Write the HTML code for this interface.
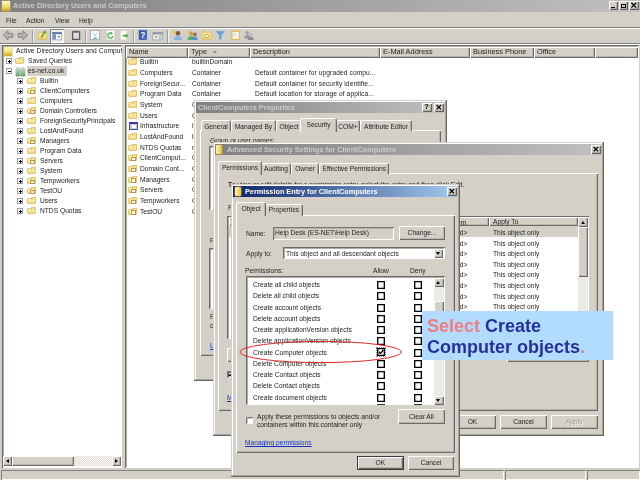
<!DOCTYPE html>
<html>
<head>
<meta charset="utf-8">
<title>Active Directory Users and Computers</title>
<style>
html,body{margin:0;padding:0;}
body{will-change:transform;width:640px;height:480px;overflow:hidden;background:#d4d0c8;position:relative;
 font-family:"Liberation Sans",sans-serif;font-size:7.4px;color:#222;line-height:10px;}
div,span,i,b{position:absolute;box-sizing:border-box;white-space:nowrap;font-style:normal;font-weight:normal;}
.t{height:10px;line-height:10px;transform:scaleX(.9);transform-origin:0 50%;}
.t.c{text-align:center;transform-origin:50% 50%;}
.tb{height:12px;color:#cacaca;font-weight:bold;font-size:8px;line-height:12px;transform:scaleX(.912);transform-origin:0 50%;}
.in{background:linear-gradient(90deg,#808080,#c0c0c0);}
.ac{background:linear-gradient(90deg,#0a246a,#a6caf0);}
.cap{background:#d4d0c8;box-shadow:inset 1px 1px 0 #fff,inset -1px -1px 0 #606060,inset -2px -2px 0 #b4b0a8;width:10px;height:9px;font-size:7px;line-height:9px;text-align:center;color:#000;font-weight:bold;}
.dlg{background:#d4d0c8;box-shadow:inset -1px -1px 0 #686868,inset 1px 1px 0 #d4d0c8,inset -2px -2px 0 #a8a49c,inset 2px 2px 0 #fff;}
.sunk{background:#fff;box-shadow:inset 1px 1px 0 #6c6c6c,inset -1px -1px 0 #fff,inset 2px 2px 0 #b0aca4;}
.btn{background:#d4d0c8;box-shadow:inset 1px 1px 0 #fff,inset -1px -1px 0 #6a6a6a,inset -2px -2px 0 #b8b4ac;text-align:center;}
.hdr{background:#d4d0c8;box-shadow:inset 1px 1px 0 #fff,inset -1px -1px 0 #6a6a6a,inset -2px -2px 0 #b8b4ac;height:11px;line-height:9px;padding-left:3px;}
.tab{background:#d4d0c8;box-shadow:inset 1px 1px 0 #fff,inset -1px 0 0 #6a6a6a,inset -2px 0 0 #b8b4ac;border-radius:2px 2px 0 0;text-align:center;}
.page{background:#d4d0c8;box-shadow:inset 1px 1px 0 #fff,inset -1px -1px 0 #6a6a6a,inset -2px -2px 0 #b8b4ac;}
.chk{width:8px;height:8px;background:#fff;border:1px solid #000;box-shadow:inset 0 0 0 .35px #000;}
.pm{width:6px;height:6px;border:1px solid #9c9c9c;}
.pm{background:linear-gradient(#000,#000) center/3px 1px no-repeat,#fff;}
.pm.p{background:linear-gradient(#000,#000) center/3px 1px no-repeat,linear-gradient(#000,#000) center/1px 3px no-repeat,#fff;}
.trk{background:repeating-conic-gradient(#f6f5f2 0 25%,#e2dfd8 0 50%) 0 0/2px 2px;}
.f{width:9px;height:6px;background:linear-gradient(#fff6c4,#f3d878);border:1px solid #e2c678;border-radius:1px;}
.f:before{content:"";position:absolute;left:3px;top:-2px;width:3px;height:2px;background:#f6e08c;border:1px solid #e2c678;border-bottom:0;}
.f.o:after{content:"";position:absolute;left:1.5px;top:.5px;width:3px;height:2.5px;border:1px solid #b89848;background:#fffbe0;}
.sep{width:2px;height:13px;border-left:1px solid #9c9c9c;border-right:1px solid #f4f4f4;}
.ic{width:10px;height:10px;}
</style>
</head>
<body>
<div class="in" style="left:0px;top:0px;width:640px;height:12px;"></div>
<div class="" style="left:2.3px;top:1.3px;width:8px;height:9.4px;background:linear-gradient(#fff8c8,#f4dc70 55%,#c8a428);box-shadow:0 0 0 .4px #c8b060;"></div>
<div class="tb" style="left:13px;top:0;">Active Directory Users and Computers</div>
<div class="cap" style="left:608.5px;top:1px;width:9px;height:8.6px;"><i style="left:2px;top:5.6px;width:4px;height:1.3px;background:#000"></i></div>
<div class="cap" style="left:618.5px;top:1px;width:9px;height:8.6px;"><i style="left:2px;top:2.5px;width:5px;height:4.4px;border:1px solid #000;border-top-width:1.6px"></i></div>
<div class="cap" style="left:629.4px;top:1px;width:10px;height:8.6px;"><svg style="position:absolute;left:0;top:0" width="10" height="9" viewBox="0 0 10 9"><path d="M2.4 1.8 L7.2 6.6 M7.2 1.8 L2.4 6.6" stroke="#000" stroke-width="1.25" fill="none"/></svg></div>
<div class="t" style="left:6px;top:15.7px;">File</div>
<div class="t" style="left:26px;top:15.7px;">Action</div>
<div class="t" style="left:55px;top:15.7px;">View</div>
<div class="t" style="left:79px;top:15.7px;">Help</div>
<div class="" style="left:0px;top:27px;width:640px;height:1px;background:#808080"></div>
<div class="" style="left:0px;top:28px;width:640px;height:1px;background:#fff"></div>
<div class="" style="left:0px;top:43px;width:640px;height:1px;background:#808080"></div>
<div class="" style="left:0px;top:44px;width:640px;height:1px;background:#fff"></div>
<div class="sep" style="left:32px;top:30px;width:2px;height:13px;"></div>
<div class="sep" style="left:85px;top:30px;width:2px;height:13px;"></div>
<div class="sep" style="left:133px;top:30px;width:2px;height:13px;"></div>
<div class="sep" style="left:167px;top:30px;width:2px;height:13px;"></div>
<div class="" style="left:50px;top:29px;width:14px;height:14px;background:#f2f1ed;box-shadow:inset 1px 1px 0 #808080,inset -1px -1px 0 #fff;"></div>
<svg style="position:absolute;left:0;top:28px" width="260" height="16" viewBox="0 28 260 16">
<defs><linearGradient id="gy" x1="0" y1="0" x2="0" y2="1"><stop offset="0" stop-color="#fff4b0"/><stop offset="1" stop-color="#f0d060"/></linearGradient>
<linearGradient id="gb" x1="0" y1="0" x2="1" y2="1"><stop offset="0" stop-color="#2848a8"/><stop offset="1" stop-color="#5078d0"/></linearGradient></defs>
<path d="M3.2 35.3 L8 30.8 V33.3 H12.8 V37.3 H8 V39.8 Z" fill="#b4b4b4" stroke="#808080" stroke-width=".9"/>
<path d="M27.8 35.3 L23 30.8 V33.3 H18.2 V37.3 H23 V39.8 Z" fill="#b4b4b4" stroke="#808080" stroke-width=".9"/>
<rect x="38.3" y="33" width="8.4" height="6.4" fill="url(#gy)" stroke="#d8b858" stroke-width=".6"/>
<path d="M40.5 37 L43.5 32.5 L42.3 32 L46 30.5 L46.2 34 L45 33.3 L42 37.8 Z" fill="#58b030"/>
<rect x="52.3" y="32.3" width="9.4" height="7.6" fill="#fff" stroke="#8898b8" stroke-width=".7"/>
<rect x="52.3" y="32.3" width="9.4" height="1.8" fill="#5870a8"/>
<rect x="53" y="34.3" width="3" height="5.2" fill="#7890c8"/>
<path d="M59.5 35.3 L57.5 36.8 L59.5 38.3 Z" fill="#508050"/>
<rect x="72.6" y="31.8" width="7" height="7.6" fill="#dcdcdc" stroke="#5c5c5c" stroke-width="1.3"/>
<rect x="74.6" y="30.8" width="3" height="1.6" fill="#5c5c5c"/>
<rect x="90.6" y="30.5" width="8.8" height="9.2" fill="#fdfdff" stroke="#9aa0b0" stroke-width=".8"/>
<path d="M93 33 L95 36 L97 33" fill="none" stroke="#a8c4e8" stroke-width="1"/>
<rect x="93.5" y="37.5" width="3.2" height="1.4" fill="#40b8c8"/>
<rect x="106.8" y="30.8" width="7.6" height="9" fill="#fff" stroke="#d8d8d8" stroke-width=".5"/>
<path d="M113 35.8 A2.6 2.6 0 1 1 111.5 33.2" fill="none" stroke="#48b048" stroke-width="1.3"/>
<path d="M110.6 31.8 L113 33.3 L110.8 34.8 Z" fill="#48b048"/>
<rect x="120.3" y="30.8" width="6.6" height="9" fill="#fffef4" stroke="#d8d4c0" stroke-width=".5"/>
<path d="M122.5 35 H125.5 V33.6 L128.5 35.8 L125.5 38 V36.6 H122.5 Z" fill="#48b048"/>
<rect x="138.8" y="30.2" width="8.2" height="9.8" fill="url(#gb)"/>
<text x="142.9" y="38.3" font-family="Liberation Sans, sans-serif" font-size="8.5" font-weight="bold" fill="#fff" text-anchor="middle">?</text>
<rect x="152.9" y="32.5" width="9.8" height="7.4" fill="#f0f0f4" stroke="#9098a8" stroke-width=".7"/>
<rect x="152.9" y="32.5" width="9.8" height="1.8" fill="#8890a4"/>
<path d="M155.5 35.3 L157.8 36.8 L155.5 38.3 Z" fill="#78a838"/>
<rect x="159" y="34.8" width="2.5" height="4.6" fill="#b8c0d0"/>
<circle cx="178" cy="33.2" r="2.3" fill="#7a5a40"/>
<path d="M173.8 40 Q173.8 35.8 178 35.8 Q182.2 35.8 182.2 40 Z" fill="#88b8e4"/>
<path d="M172.3 32.5 L174.5 30.5 L176.2 32.3 L174.5 34.3 Z" fill="#f0c040"/>
<circle cx="191" cy="33.5" r="2" fill="#c89858"/><path d="M187.5 40 Q187.5 36 191 36 Q194.5 36 194.5 40 Z" fill="#58b060"/>
<circle cx="194.8" cy="34.5" r="1.9" fill="#a07050"/><path d="M191.8 40 Q191.8 36.8 194.8 36.8 Q197.6 36.8 197.6 40 Z" fill="#5890d0"/>
<path d="M187 32 L188.8 30.3 L190.3 32 L188.8 33.6 Z" fill="#f0c040"/>
<rect x="202.3" y="32.5" width="8.6" height="6.8" fill="url(#gy)" stroke="#dcc060" stroke-width=".6"/>
<rect x="205" y="34.3" width="3.2" height="3.4" fill="#fffbe0" stroke="#b89848" stroke-width=".7"/>
<path d="M201.8 32.3 L203.8 30 L205.6 32.3 Z" fill="#f0c040"/>
<path d="M215.7 31.2 H225 L221.5 35.2 V39.4 H219.2 V35.2 Z" fill="#68a0d8"/>
<rect x="231.9" y="31.3" width="7.4" height="8" fill="#fffdf0" stroke="#e0b838" stroke-width="1.1"/>
<circle cx="235" cy="34.8" r="1.8" fill="#f4f4f4" stroke="#c0c0c0" stroke-width=".6"/>
<circle cx="247.2" cy="32.8" r="1.9" fill="#a4a4a4"/><path d="M244.2 38.5 Q244.2 35 247.2 35 Q250.2 35 250.2 38.5 Z" fill="#989898"/>
<circle cx="250.8" cy="34.8" r="1.8" fill="#b8b8b8"/><path d="M247.8 40 Q247.8 37 250.8 37 Q253.8 37 253.8 40 Z" fill="#8c8c8c"/>
</svg>
<div class="sunk" style="left:2px;top:45px;width:120px;height:423px;overflow:hidden;">
<div style="left:2.3px;top:2px;width:7.6px;height:9px;background:linear-gradient(#fff8c8,#f4dc70 55%,#c8a428);box-shadow:0 0 0 .4px #c8b060;"></div>
<div class="t" style="left:14px;top:1px;letter-spacing:.09px">Active Directory Users and Computers</div>
<div class="pm p" style="left:4px;top:13px;"></div>
<div class="f" style="left:13px;top:13px;"></div>
<div class="t" style="left:26px;top:11px;">Saved Queries</div>
<div class="pm" style="left:4px;top:23px;"></div>
<div style="left:14px;top:22.5px;width:4.4px;height:8px;background:linear-gradient(#c8d8e0,#88c088 60%,#60a068);border-radius:1.5px 1.5px 0 0;box-shadow:0 0 0 .4px #90a8a0;"></div>
<div style="left:18.8px;top:22.5px;width:4.4px;height:8px;background:linear-gradient(#c8d8e0,#88c088 60%,#60a068);border-radius:1.5px 1.5px 0 0;box-shadow:0 0 0 .4px #90a8a0;"></div>
<div style="left:25px;top:21px;width:40px;height:10px;background:#d4d0c8;"></div>
<div class="t" style="left:26px;top:21px;">es-net.co.uk</div>
<div class="pm p" style="left:15px;top:33px;"></div>
<div class="f" style="left:25px;top:33px;"></div>
<div class="t" style="left:38px;top:31px;">Builtin</div>
<div class="pm p" style="left:15px;top:43px;"></div>
<div class="f o" style="left:25px;top:43px;"></div>
<div class="t" style="left:38px;top:41px;">ClientComputers</div>
<div class="pm p" style="left:15px;top:53px;"></div>
<div class="f" style="left:25px;top:53px;"></div>
<div class="t" style="left:38px;top:51px;">Computers</div>
<div class="pm p" style="left:15px;top:63px;"></div>
<div class="f o" style="left:25px;top:63px;"></div>
<div class="t" style="left:38px;top:61px;">Domain Controllers</div>
<div class="pm p" style="left:15px;top:73px;"></div>
<div class="f" style="left:25px;top:73px;"></div>
<div class="t" style="left:38px;top:71px;">ForeignSecurityPrincipals</div>
<div class="pm p" style="left:15px;top:83px;"></div>
<div class="f" style="left:25px;top:83px;"></div>
<div class="t" style="left:38px;top:81px;">LostAndFound</div>
<div class="pm p" style="left:15px;top:93px;"></div>
<div class="f o" style="left:25px;top:93px;"></div>
<div class="t" style="left:38px;top:91px;">Managers</div>
<div class="pm p" style="left:15px;top:103px;"></div>
<div class="f" style="left:25px;top:103px;"></div>
<div class="t" style="left:38px;top:101px;">Program Data</div>
<div class="pm p" style="left:15px;top:113px;"></div>
<div class="f o" style="left:25px;top:113px;"></div>
<div class="t" style="left:38px;top:111px;">Servers</div>
<div class="pm p" style="left:15px;top:123px;"></div>
<div class="f" style="left:25px;top:123px;"></div>
<div class="t" style="left:38px;top:121px;">System</div>
<div class="pm p" style="left:15px;top:133px;"></div>
<div class="f o" style="left:25px;top:133px;"></div>
<div class="t" style="left:38px;top:131px;">Tempworkers</div>
<div class="pm p" style="left:15px;top:143px;"></div>
<div class="f o" style="left:25px;top:143px;"></div>
<div class="t" style="left:38px;top:141px;">TestOU</div>
<div class="pm p" style="left:15px;top:153px;"></div>
<div class="f" style="left:25px;top:153px;"></div>
<div class="t" style="left:38px;top:151px;">Users</div>
<div class="pm p" style="left:15px;top:163px;"></div>
<div class="f" style="left:25px;top:163px;"></div>
<div class="t" style="left:38px;top:161px;">NTDS Quotas</div>
<div class="trk" style="left:1px;top:411.3px;width:118px;height:9.7px;"></div>
<div class="btn" style="left:1px;top:411.3px;width:9px;height:9.7px;"><i style="left:2.5px;top:2.8px;border:2px solid transparent;border-right:3px solid #000;border-left:0"></i></div>
<div class="btn" style="left:10px;top:411.3px;width:62px;height:9.7px;"></div>
<div class="btn" style="left:109.7px;top:411.3px;width:9.3px;height:9.7px;"><i style="left:3.5px;top:2.8px;border:2px solid transparent;border-left:3px solid #000;border-right:0"></i></div>
</div>
<div class="sunk" style="left:125px;top:45px;width:514px;height:423px;overflow:hidden;">
<div class="hdr" style="left:1px;top:1.5px;width:62px;">Name</div>
<div class="hdr" style="left:63px;top:1.5px;width:62px;">Type</div>
<div class="hdr" style="left:125px;top:1.5px;width:130px;">Description</div>
<div class="hdr" style="left:255px;top:1.5px;width:90px;">E-Mail Address</div>
<div class="hdr" style="left:345px;top:1.5px;width:64px;">Business Phone</div>
<div class="hdr" style="left:409px;top:1.5px;width:61px;">Office</div>
<div class="hdr" style="left:470px;top:1.5px;width:43px;"></div>
<i style="left:88px;top:5px;border:2.5px solid transparent;border-bottom:3px solid #909090;border-top:0"></i>
<div class="f" style="left:3px;top:14.4px;"></div>
<div class="t" style="left:14.5px;top:12.3px;">Builtin</div>
<div class="t" style="left:67px;top:12.3px;">builtinDomain</div>
<div class="f" style="left:3px;top:25.07px;"></div>
<div class="t" style="left:14.5px;top:22.97px;">Computers</div>
<div class="t" style="left:67px;top:22.97px;">Container</div>
<div class="t" style="left:129.5px;top:22.97px;letter-spacing:.1px">Default container for upgraded compu...</div>
<div class="f" style="left:3px;top:35.73px;"></div>
<div class="t" style="left:14.5px;top:33.63px;">ForeignSecur...</div>
<div class="t" style="left:67px;top:33.63px;">Container</div>
<div class="t" style="left:129.5px;top:33.63px;letter-spacing:.1px">Default container for security identifie...</div>
<div class="f" style="left:3px;top:46.4px;"></div>
<div class="t" style="left:14.5px;top:44.3px;">Program Data</div>
<div class="t" style="left:67px;top:44.3px;">Container</div>
<div class="t" style="left:129.5px;top:44.3px;letter-spacing:.1px">Default location for storage of applica...</div>
<div class="f" style="left:3px;top:57.07px;"></div>
<div class="t" style="left:14.5px;top:54.97px;">System</div>
<div class="t" style="left:67px;top:54.97px;">Container</div>
<div class="f" style="left:3px;top:67.73px;"></div>
<div class="t" style="left:14.5px;top:65.63px;">Users</div>
<div class="t" style="left:67px;top:65.63px;">Container</div>
<div style="left:3.5px;top:76.8px;width:9px;height:8.5px;background:linear-gradient(#fff,#fff) 2px 1px/4px 3px no-repeat,#c8c8e0;border:1px solid #50508c;border-top:2px solid #38389c;"></div>
<div class="t" style="left:14.5px;top:76.3px;">Infrastructure</div>
<div class="t" style="left:67px;top:76.3px;">infrastructure...</div>
<div class="f" style="left:3px;top:89.07px;"></div>
<div class="t" style="left:14.5px;top:86.97px;">LostAndFound</div>
<div class="t" style="left:67px;top:86.97px;">lostAndFound</div>
<div class="f" style="left:3px;top:99.74px;"></div>
<div class="t" style="left:14.5px;top:97.64px;">NTDS Quotas</div>
<div class="t" style="left:67px;top:97.64px;">msDS-Quota...</div>
<div class="f o" style="left:3px;top:110.4px;"></div>
<div class="t" style="left:14.5px;top:108.3px;">ClientComput...</div>
<div class="t" style="left:67px;top:108.3px;">Organization...</div>
<div class="f o" style="left:3px;top:121.07px;"></div>
<div class="t" style="left:14.5px;top:118.97px;">Domain Cont...</div>
<div class="t" style="left:67px;top:118.97px;">Organization...</div>
<div class="f o" style="left:3px;top:131.74px;"></div>
<div class="t" style="left:14.5px;top:129.64px;">Managers</div>
<div class="t" style="left:67px;top:129.64px;">Organization...</div>
<div class="f o" style="left:3px;top:142.4px;"></div>
<div class="t" style="left:14.5px;top:140.3px;">Servers</div>
<div class="t" style="left:67px;top:140.3px;">Organization...</div>
<div class="f o" style="left:3px;top:153.07px;"></div>
<div class="t" style="left:14.5px;top:150.97px;">Tempworkers</div>
<div class="t" style="left:67px;top:150.97px;">Organization...</div>
<div class="f o" style="left:3px;top:163.74px;"></div>
<div class="t" style="left:14.5px;top:161.64px;">TestOU</div>
<div class="t" style="left:67px;top:161.64px;">Organization...</div>
</div>
<div class="" style="left:0px;top:468px;width:640px;height:12px;background:#d4d0c8"></div>
<div class="" style="left:1px;top:470px;width:503px;height:10px;box-shadow:inset 1px 1px 0 #808080,inset -1px -1px 0 #fff;"></div>
<div class="" style="left:505px;top:470px;width:81px;height:10px;box-shadow:inset 1px 1px 0 #808080,inset -1px -1px 0 #fff;"></div>
<div class="" style="left:587px;top:470px;width:53px;height:10px;box-shadow:inset 1px 1px 0 #808080,inset -1px -1px 0 #fff;"></div>
<div class="dlg" style="left:194px;top:100px;width:253px;height:280.6px;"></div>
<div class="in" style="left:196px;top:102px;width:249px;height:11px;"></div>
<div class="tb" style="left:198px;top:101.5px;">ClientComputers Properties</div>
<div class="cap" style="left:422px;top:103px;width:10px;height:9px;"><i style="left:0;top:0;width:9px;text-align:center;font-size:7.5px;line-height:8.5px;font-weight:bold;color:#000">?</i></div>
<div class="cap" style="left:434px;top:103px;width:10px;height:9px;"><svg style="position:absolute;left:0;top:0" width="10" height="9" viewBox="0 0 10 9"><path d="M2.6 2 L7 6.4 M7 2 L2.6 6.4" stroke="#000" stroke-width="1.2" fill="none"/></svg></div>
<div class="page" style="left:200px;top:130px;width:241px;height:225.6px;"></div>
<div class="tab" style="left:201px;top:120px;width:30px;height:11px;"></div>
<div class="t c" style="left:201px;top:121.6px;width:30px;">General</div>
<div class="tab" style="left:231px;top:120px;width:45px;height:11px;"></div>
<div class="t c" style="left:231px;top:121.6px;width:45px;">Managed By</div>
<div class="tab" style="left:276px;top:120px;width:26px;height:11px;"></div>
<div class="t c" style="left:276px;top:121.6px;width:26px;">Object</div>
<div class="tab" style="left:336px;top:120px;width:24px;height:11px;"></div>
<div class="t c" style="left:336px;top:121.6px;width:24px;">COM+</div>
<div class="tab" style="left:360px;top:120px;width:52px;height:11px;"></div>
<div class="t c" style="left:360px;top:121.6px;width:52px;">Attribute Editor</div>
<div class="tab" style="left:300px;top:117.5px;width:37px;height:14px;background:#d4d0c8;"></div>
<div class="t c" style="left:300px;top:119.6px;width:37px;">Security</div>
<div class="t" style="left:210px;top:136px;">Group or user names:</div>
<div class="sunk" style="left:209px;top:146px;width:220px;height:64px;"></div>
<div class="t" style="left:209.5px;top:236.4px;">Permissions for Help Desk</div>
<div class="sunk" style="left:209px;top:248px;width:220px;height:61px;"></div>
<div class="t" style="left:209.5px;top:312px;">For special permissions or advanced settings,</div>
<div class="t" style="left:209.5px;top:321px;">click Advanced.</div>
<div class="t" style="left:209.5px;top:340.5px;color:#1030c0;text-decoration:underline;">Learn about access control and permissions</div>
<div class="dlg" style="left:213px;top:142px;width:391px;height:293.6px;"></div>
<div class="in" style="left:215px;top:144px;width:387px;height:11px;"></div>
<div class="" style="left:215.8px;top:145px;width:6px;height:9px;background:linear-gradient(90deg,#fff6b0,#e6c040);border-radius:1px;box-shadow:0 0 0 .5px #b09030;"></div>
<div class="tb" style="left:227px;top:143.5px;">Advanced Security Settings for ClientComputers</div>
<div class="cap" style="left:591px;top:145px;width:10px;height:9px;"><svg style="position:absolute;left:0;top:0" width="10" height="9" viewBox="0 0 10 9"><path d="M2.6 2 L7 6.4 M7 2 L2.6 6.4" stroke="#000" stroke-width="1.2" fill="none"/></svg></div>
<div class="page" style="left:218px;top:173px;width:380px;height:238px;"></div>
<div class="tab" style="left:261px;top:162.5px;width:30px;height:11.5px;"></div>
<div class="t c" style="left:261px;top:163.5px;width:30px;">Auditing</div>
<div class="tab" style="left:291px;top:162.5px;width:28px;height:11.5px;"></div>
<div class="t c" style="left:291px;top:163.5px;width:28px;">Owner</div>
<div class="tab" style="left:319px;top:162.5px;width:70px;height:11.5px;"></div>
<div class="t c" style="left:319px;top:163.5px;width:70px;">Effective Permissions</div>
<div class="tab" style="left:218px;top:160.5px;width:44px;height:14px;"></div>
<div class="t c" style="left:218px;top:162.5px;width:44px;">Permissions</div>
<div class="t" style="left:227.6px;top:180.2px;"><b style="position:static;font-weight:bold;color:#501850">T</b>o view or edit details for a permission entry, select the entry and then click Edit.</div>
<div class="t" style="left:228px;top:203px;">Permission entries:</div>
<div class="sunk" style="left:227px;top:216px;width:362px;height:123px;"></div>
<div class="hdr" style="left:229px;top:217px;width:70px;height:9.4px;">Type</div>
<div class="hdr" style="left:299px;top:217px;width:100px;height:9.4px;">Name</div>
<div class="hdr" style="left:399px;top:217px;width:90px;height:9.4px;"></div>
<div class="t" style="right:174px;top:217.5px;transform-origin:100% 50%;">Inherited From</div>
<div class="hdr" style="left:489px;top:217px;width:89px;height:9.4px;"></div>
<div class="t" style="left:492.5px;top:217.3px;">Apply To</div>
<div class="" style="left:229px;top:226px;width:349px;height:11.3px;background:#d4d0c8"></div>
<div class="t" style="right:173px;top:227.9px;transform-origin:100% 50%;">&lt;not inherited&gt;</div>
<div class="t" style="left:492.5px;top:227.9px;">This object only</div>
<div class="t" style="right:173px;top:238.525px;transform-origin:100% 50%;">&lt;not inherited&gt;</div>
<div class="t" style="left:492.5px;top:238.525px;">This object only</div>
<div class="t" style="right:173px;top:249.15px;transform-origin:100% 50%;">&lt;not inherited&gt;</div>
<div class="t" style="left:492.5px;top:249.15px;">This object only</div>
<div class="t" style="right:173px;top:259.775px;transform-origin:100% 50%;">&lt;not inherited&gt;</div>
<div class="t" style="left:492.5px;top:259.775px;">This object only</div>
<div class="t" style="right:173px;top:270.4px;transform-origin:100% 50%;">&lt;not inherited&gt;</div>
<div class="t" style="left:492.5px;top:270.4px;">This object only</div>
<div class="t" style="right:173px;top:281.025px;transform-origin:100% 50%;">&lt;not inherited&gt;</div>
<div class="t" style="left:492.5px;top:281.025px;">This object only</div>
<div class="t" style="right:173px;top:291.65px;transform-origin:100% 50%;">&lt;not inherited&gt;</div>
<div class="t" style="left:492.5px;top:291.65px;">This object only</div>
<div class="t" style="right:173px;top:302.275px;transform-origin:100% 50%;">&lt;not inherited&gt;</div>
<div class="t" style="left:492.5px;top:302.275px;">This object only</div>
<div class="trk" style="left:578px;top:217px;width:10px;height:121px;"></div>
<div class="btn" style="left:578px;top:217px;width:10px;height:10px;"><i style="left:2.5px;top:3.5px;border:2.5px solid transparent;border-bottom:3px solid #000;border-top:0"></i></div>
<div class="btn" style="left:578px;top:227px;width:10px;height:50px;"></div>
<div class="btn" style="left:578px;top:328px;width:10px;height:10px;"><i style="left:2.5px;top:3.5px;border:2.5px solid transparent;border-top:3px solid #000;border-bottom:0"></i></div>
<div class="btn" style="left:227px;top:347.7px;width:50px;height:14.6px;"></div>
<div class="t c" style="left:227px;top:350.0px;width:50px;">Add...</div>
<div class="btn" style="left:507px;top:347.7px;width:82px;height:14.6px;"></div>
<div class="t c" style="left:507px;top:350.0px;width:82px;">Restore defaults</div>
<div class="" style="left:227px;top:371.2px;width:7px;height:7px;background:#fff;box-shadow:inset 1px 1px 0 #808080,inset -1px -1px 0 #f4f4f4,inset 2px 2px 0 #606060;"></div>
<svg style="position:absolute;left:227px;top:371.2px" width="7" height="7" viewBox="0 0 8 8"><path d="M1.8 3.8 L3.4 5.6 L6.3 2" fill="none" stroke="#000" stroke-width="1.4"/></svg>
<div class="t" style="left:238px;top:370px;">Include inheritable permissions from this object's parent</div>
<div class="t" style="left:227px;top:392.5px;color:#1030c0;text-decoration:underline;">Managing permission entries</div>
<div class="btn" style="left:449px;top:414.6px;width:47px;height:14.7px;"></div>
<div class="t c" style="left:449px;top:416.95000000000005px;width:47px;">OK</div>
<div class="btn" style="left:500px;top:414.6px;width:47px;height:14.7px;"></div>
<div class="t c" style="left:500px;top:416.95000000000005px;width:47px;">Cancel</div>
<div class="btn" style="left:551px;top:414.6px;width:46.5px;height:14.7px;"></div>
<div class="t c" style="left:551px;top:416.95000000000005px;width:46.5px;color:#9a968e;text-shadow:.6px .6px 0 #fff;">Apply</div>
<div class="dlg" style="left:231px;top:184px;width:229px;height:292.5px;"></div>
<div class="ac" style="left:233px;top:186px;width:225px;height:11px;"></div>
<div class="" style="left:234.5px;top:187px;width:6px;height:9px;background:linear-gradient(90deg,#fff6b0,#e6c040);border-radius:1px;box-shadow:0 0 0 .5px #b09030;"></div>
<div class="tb" style="left:245px;top:185.5px;color:#fff;">Permission Entry for ClientComputers</div>
<div class="cap" style="left:447px;top:187px;width:10px;height:9px;"><svg style="position:absolute;left:0;top:0" width="10" height="9" viewBox="0 0 10 9"><path d="M2.6 2 L7 6.4 M7 2 L2.6 6.4" stroke="#000" stroke-width="1.2" fill="none"/></svg></div>
<div class="page" style="left:236px;top:215px;width:219px;height:238px;"></div>
<div class="tab" style="left:265px;top:204px;width:38px;height:12px;"></div>
<div class="t c" style="left:265px;top:205.3px;width:38px;">Properties</div>
<div class="tab" style="left:236px;top:202px;width:30px;height:14px;"></div>
<div class="t c" style="left:236px;top:204px;width:30px;">Object</div>
<div class="t" style="left:245.5px;top:228.5px;">Name:</div>
<div class="" style="left:272.5px;top:227px;width:121.5px;height:12.5px;background:#d4d0c8;box-shadow:inset 1px 1px 0 #787878,inset -1px -1px 0 #fff,inset 2px 2px 0 #b4b0a8;"></div>
<div class="t" style="left:275px;top:228.3px;">Help Desk (ES-NET\Help Desk)</div>
<div class="btn" style="left:398.5px;top:226.2px;width:46px;height:14px;"></div>
<div class="t c" style="left:398.5px;top:228.2px;width:46px;">Change...</div>
<div class="t" style="left:245.5px;top:249px;">Apply to:</div>
<div class="sunk" style="left:283px;top:247px;width:161.5px;height:12.2px;"></div>
<div class="t" style="left:285.8px;top:249px;">This object and all descendant objects</div>
<div class="btn" style="left:434.4px;top:248.7px;width:9px;height:9px;"><i style="left:2.0px;top:3.0px;border:2.5px solid transparent;border-top:3px solid #000;border-bottom:0"></i></div>
<div class="t" style="left:245px;top:266px;">Permissions:</div>
<div class="t" style="left:373px;top:266px;">Allow</div>
<div class="t" style="left:409.5px;top:266px;">Deny</div>
<div class="sunk" style="left:245.5px;top:276px;width:199px;height:129px;overflow:hidden"></div>
<div class="t" style="left:253.3px;top:280.0px;">Create all child objects</div>
<div class="chk" style="left:377px;top:281.0px;width:8px;height:8px;"></div>
<div class="chk" style="left:414px;top:281.0px;width:8px;height:8px;"></div>
<div class="t" style="left:253.3px;top:291.25px;">Delete all child objects</div>
<div class="chk" style="left:377px;top:292.25px;width:8px;height:8px;"></div>
<div class="chk" style="left:414px;top:292.25px;width:8px;height:8px;"></div>
<div class="t" style="left:253.3px;top:302.5px;">Create account objects</div>
<div class="chk" style="left:377px;top:303.5px;width:8px;height:8px;"></div>
<div class="chk" style="left:414px;top:303.5px;width:8px;height:8px;"></div>
<div class="t" style="left:253.3px;top:313.75px;">Delete account objects</div>
<div class="chk" style="left:377px;top:314.75px;width:8px;height:8px;"></div>
<div class="chk" style="left:414px;top:314.75px;width:8px;height:8px;"></div>
<div class="t" style="left:253.3px;top:325.0px;">Create applicationVersion objects</div>
<div class="chk" style="left:377px;top:326.0px;width:8px;height:8px;"></div>
<div class="chk" style="left:414px;top:326.0px;width:8px;height:8px;"></div>
<div class="t" style="left:253.3px;top:336.25px;">Delete applicationVersion objects</div>
<div class="chk" style="left:377px;top:337.25px;width:8px;height:8px;"></div>
<div class="chk" style="left:414px;top:337.25px;width:8px;height:8px;"></div>
<div class="t" style="left:253.3px;top:347.5px;">Create Computer objects</div>
<div class="chk" style="left:377px;top:347.7px;width:8px;height:8px;"></div>
<div class="chk" style="left:414px;top:348.5px;width:8px;height:8px;"></div>
<div class="t" style="left:253.3px;top:358.75px;">Delete Computer objects</div>
<div class="chk" style="left:377px;top:359.75px;width:8px;height:8px;"></div>
<div class="chk" style="left:414px;top:359.75px;width:8px;height:8px;"></div>
<div class="t" style="left:253.3px;top:370.0px;">Create Contact objects</div>
<div class="chk" style="left:377px;top:371.0px;width:8px;height:8px;"></div>
<div class="chk" style="left:414px;top:371.0px;width:8px;height:8px;"></div>
<div class="t" style="left:253.3px;top:381.25px;">Delete Contact objects</div>
<div class="chk" style="left:377px;top:382.25px;width:8px;height:8px;"></div>
<div class="chk" style="left:414px;top:382.25px;width:8px;height:8px;"></div>
<div class="t" style="left:253.3px;top:392.5px;">Create document objects</div>
<div class="chk" style="left:377px;top:393.5px;width:8px;height:8px;"></div>
<div class="chk" style="left:414px;top:393.5px;width:8px;height:8px;"></div>
<div class="" style="left:377px;top:403.7px;width:8px;height:1.3px;background:#333"></div>
<div class="" style="left:414px;top:403.7px;width:8px;height:1.3px;background:#333"></div>
<div class="" style="left:376px;top:346.8px;width:10px;height:10.4px;border:1px dotted #777;"></div>
<svg style="position:absolute;left:377px;top:347.8px" width="8" height="8" viewBox="0 0 8 8"><path d="M1.8 3.8 L3.4 5.6 L6.3 2" fill="none" stroke="#000" stroke-width="1.3"/></svg>
<div class="trk" style="left:433.6px;top:278px;width:10px;height:126px;"></div>
<div class="btn" style="left:433.6px;top:278px;width:10px;height:9px;"><i style="left:2.5px;top:3.0px;border:2.5px solid transparent;border-bottom:3px solid #000;border-top:0"></i></div>
<div class="btn" style="left:433.6px;top:301px;width:10px;height:29px;"></div>
<div class="btn" style="left:433.6px;top:395.5px;width:10px;height:9px;"><i style="left:2.5px;top:3.0px;border:2.5px solid transparent;border-top:3px solid #000;border-bottom:0"></i></div>
<svg style="position:absolute;left:236px;top:338px" width="170" height="28" viewBox="0 0 170 28"><ellipse cx="84.6" cy="14" rx="80.6" ry="10.6" fill="none" stroke="#e02828" stroke-width="1"/></svg>
<div class="" style="left:246.3px;top:416.8px;width:7px;height:7px;background:#fff;box-shadow:inset 1px 1px 0 #808080,inset -1px -1px 0 #f4f4f4,inset 2px 2px 0 #c0c0c0;"></div>
<div class="t" style="left:257px;top:412.3px;">Apply these permissions to objects and/or</div>
<div class="t" style="left:257px;top:420.3px;">containers within this container only</div>
<div class="btn" style="left:398px;top:409.3px;width:46.7px;height:14.5px;"></div>
<div class="t c" style="left:398px;top:411.55px;width:46.7px;">Clear All</div>
<div class="t" style="left:245px;top:438.3px;color:#1030c0;text-decoration:underline;">Managing permissions</div>
<div class="" style="left:357px;top:455.8px;width:46.8px;height:14.7px;background:#3a3a3a;"></div>
<div class="btn" style="left:358px;top:456.8px;width:44.8px;height:12.7px;"></div>
<div class="t c" style="left:357px;top:458.15000000000003px;width:46.8px;">OK</div>
<div class="btn" style="left:407.5px;top:455.8px;width:46px;height:14.7px;"></div>
<div class="t c" style="left:407.5px;top:458.15000000000003px;width:46px;">Cancel</div>
<div class="" style="left:422px;top:311.3px;width:191px;height:48.4px;background:#b2dcfe;"></div>
<div style="left:427px;top:316px;font-size:18px;line-height:21.3px;font-weight:bold;color:#f07c84;white-space:nowrap;">Select <b style="position:static;font-weight:bold;color:#27309a;">Create</b><br><b style="position:static;font-weight:bold;color:#27309a;">Computer objects</b>.</div>
</body>
</html>
